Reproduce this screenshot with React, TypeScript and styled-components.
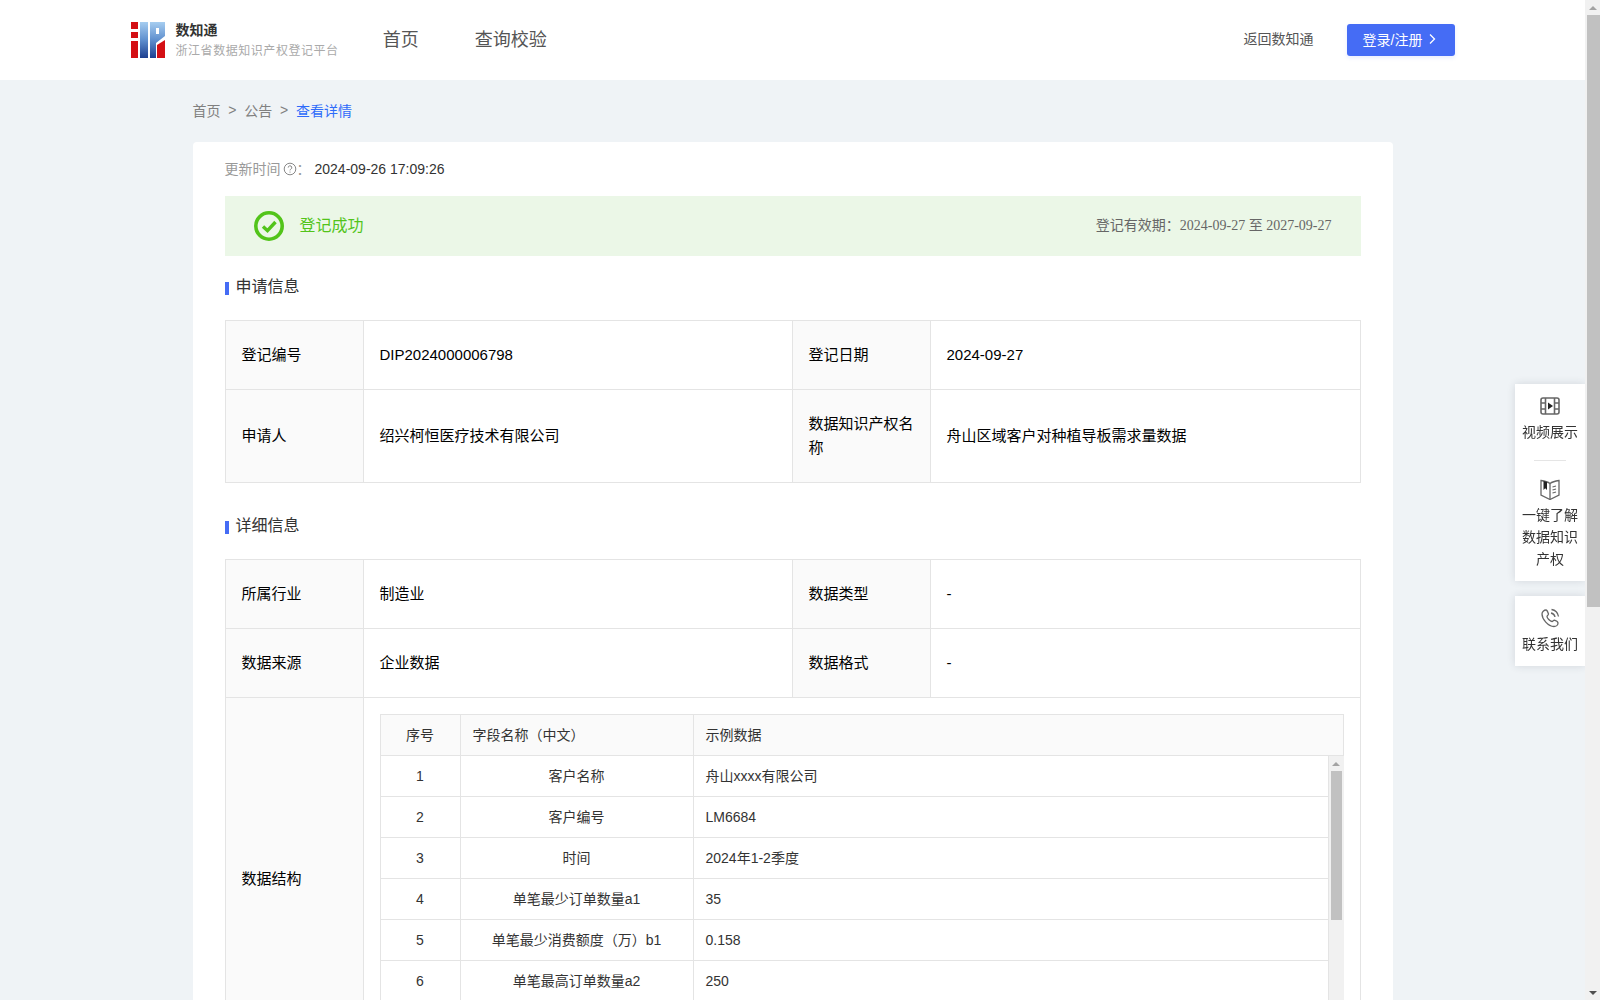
import React from "react";
import styled, { createGlobalStyle } from "styled-components";

const GlobalStyle = createGlobalStyle`
  body {
    margin: 0;
    background: #eff3f6;
    font-family: "Liberation Sans", "Noto Sans CJK SC", sans-serif;
    font-size: 14px;
    color: #333;
  }
  * {
    box-sizing: border-box;
  }
`;

const Page = styled.div`
  padding-right: 15px;
`;

const Header = styled.header`
  height: 80px;
  background: #fff;
`;

const HeaderInner = styled.div`
  width: 1324px;
  height: 100%;
  margin: 0 auto;
  display: flex;
  align-items: center;
`;

const Brand = styled.div`
  display: flex;
  align-items: center;
  gap: 11px;
`;

const BrandText = styled.div`
  display: flex;
  flex-direction: column;
  gap: 2px;
`;

const BrandName = styled.div`
  font-size: 14px;
  line-height: 20px;
  font-weight: 700;
  color: #333;
`;

const BrandSub = styled.div`
  font-size: 12px;
  line-height: 18px;
  letter-spacing: 0.55px;
  color: #aaa;
`;

const Nav = styled.nav`
  display: flex;
  gap: 56px;
  margin-left: 44px;
  padding-bottom: 5px;
`;

const NavItem = styled.a`
  font-size: 18px;
  color: #555;
`;

const HeaderRight = styled.div`
  margin-left: auto;
  display: flex;
  align-items: center;
  gap: 33px;
`;

const BackLink = styled.a`
  font-size: 14px;
  color: #555;
  padding-bottom: 4px;
`;

const LoginButton = styled.button`
  width: 108px;
  height: 32px;
  padding: 0 0 3px;
  border: 0;
  border-radius: 3px;
  background: #456cf5;
  box-shadow: 0 2px 4px rgba(69, 108, 245, 0.12);
  color: #fff;
  font: inherit;
  font-size: 14px;
  display: flex;
  align-items: center;
  justify-content: center;
  gap: 4px;
`;

const Main = styled.main`
  width: 1200px;
  margin: 0 auto;
  padding-bottom: 20px;
`;

const Breadcrumb = styled.div`
  height: 62px;
  padding-bottom: 3px;
  display: flex;
  align-items: center;
  color: #808080;
`;

const CrumbSep = styled.span`
  margin: 0 7.8px;
`;

const CrumbCurrent = styled.span`
  color: #2e6bfa;
`;

const Card = styled.section`
  min-height: 1476px;
  padding: 16px 32px 32px;
  background: #fff;
  border-radius: 4px;
`;

const UpdateRow = styled.div`
  height: 22px;
  margin-bottom: 16px;
  display: flex;
  align-items: center;
  color: #999;
`;

const UpdateLabel = styled.span`
  margin-bottom: 2px;
`;

const UpdateValue = styled.span`
  margin-left: 4px;
  color: #333;
`;

const HelpIcon = styled.svg`
  margin-left: 2px;
`;

const Banner = styled.div`
  height: 60px;
  padding: 0 29px;
  background: #ebf7e7;
  display: flex;
  align-items: center;
`;

const BannerTitle = styled.span`
  margin: 0 0 5px 16px;
  font-size: 16px;
  color: #52c41a;
`;

const Validity = styled.span`
  margin: 0 0 5px auto;
  color: #666;
`;

const SerifDate = styled.span`
  font-family: "Liberation Serif", "Noto Sans CJK SC", serif;
`;

const SectionTitle = styled.h3<{ $top: number }>`
  margin: ${(p) => p.$top}px 0 21px;
  height: 24px;
  font-size: 16px;
  font-weight: 400;
  line-height: 24px;
  color: #333;
  display: flex;
  align-items: center;

  &::before {
    content: "";
    width: 4px;
    height: 13px;
    margin: 3px 7px 0 0;
    background: #456cf5;
  }
`;

const InfoTable = styled.table`
  width: 100%;
  table-layout: fixed;
  border-collapse: collapse;
  font-size: 15px;
  line-height: 24px;
  color: #000;
`;

const Label = styled.th`
  padding: 22px 15px 22px 16px;
  border: 1px solid #e4e4e4;
  background: #fafafa;
  font-weight: 400;
  text-align: left;
`;

const Value = styled.td`
  padding: 22px 16px;
  border: 1px solid #e4e4e4;
`;

const StructureCell = styled.td`
  padding: 16px;
  border: 1px solid #e4e4e4;
`;

const Fields = styled.div`
  border-left: 1px solid #e4e4e4;
  border-top: 1px solid #e4e4e4;
  font-size: 14px;
  line-height: 20px;
  color: #333;
`;

const FieldsTable = styled.table`
  width: 100%;
  table-layout: fixed;
  border-collapse: separate;
  border-spacing: 0;
`;

const FieldsHead = styled.th<{ $center?: boolean }>`
  height: 41px;
  padding: 0 12px;
  border-right: 1px solid #e4e4e4;
  border-bottom: 1px solid #e4e4e4;
  background: #fafafa;
  font-weight: 400;
  text-align: ${(p) => (p.$center ? "center" : "left")};
`;

const FieldsBody = styled.div`
  height: 287px;
  display: flex;
`;

const FieldsRows = styled.div`
  flex: 1;
  min-width: 0;
  overflow: hidden;
`;

const FieldsCell = styled.td<{ $center?: boolean }>`
  height: 41px;
  padding: 0 12px;
  border-right: 1px solid #e4e4e4;
  border-bottom: 1px solid #e4e4e4;
  text-align: ${(p) => (p.$center ? "center" : "left")};
`;

const ScrollTrack = styled.div`
  width: 15px;
  flex: none;
  background: #f1f1f1;
`;

const PageTrack = styled(ScrollTrack)`
  position: fixed;
  top: 0;
  right: 0;
  bottom: 0;
  display: flex;
  flex-direction: column;
  justify-content: space-between;
`;

const ScrollArrow = styled.div<{ $down?: boolean }>`
  height: 15px;
  display: flex;
  align-items: center;
  justify-content: center;

  &::after {
    content: "";
    border-left: 4px solid transparent;
    border-right: 4px solid transparent;
    ${(p) =>
      p.$down
        ? "border-top: 4px solid #505050;"
        : "border-bottom: 4px solid #a3a3a3;"}
  }
`;

const PageThumb = styled.div`
  width: 13px;
  height: 592px;
  margin-left: 2px;
  background: #c1c1c1;
`;

const RowsThumb = styled.div`
  width: 11px;
  height: 149px;
  margin-left: 2px;
  background: #c1c1c1;
`;

const PageThumbSlot = styled.div`
  flex: 1;
`;

const SideDock = styled.aside`
  position: fixed;
  top: 384px;
  right: 15px;
  width: 70px;
  display: flex;
  flex-direction: column;
  gap: 15px;
`;

const SidePanel = styled.div`
  padding: 11px 7px;
  background: #fff;
  box-shadow: 0 0 8px rgba(40, 50, 70, 0.14);
  display: flex;
  flex-direction: column;
  align-items: center;
  font-size: 14px;
  line-height: 22px;
  color: #333;
  text-align: center;
`;

const SideIcon = styled.svg`
  width: 22px;
  height: 22px;
  margin-bottom: 4px;
  display: block;
`;

const SideDivider = styled.div`
  width: 32px;
  height: 1px;
  margin: 17px 0 17px;
  background: #e5e5e5;
`;

const fields = [
  ["客户名称", "舟山xxxx有限公司"],
  ["客户编号", "LM6684"],
  ["时间", "2024年1-2季度"],
  ["单笔最少订单数量a1", "35"],
  ["单笔最少消费额度（万）b1", "0.158"],
  ["单笔最高订单数量a2", "250"],
];

function Logo() {
  return (
    <svg width="34" height="36" viewBox="0 0 34 36">
      <defs>
        <linearGradient id="logoBlue" x1="0" y1="0" x2="0" y2="1">
          <stop offset="0" stopColor="#a6cdf0" />
          <stop offset="0.5" stopColor="#5f8fce" />
          <stop offset="1" stopColor="#1d3f8f" />
        </linearGradient>
      </defs>
      <rect x="0" y="0" width="7" height="7" fill="#d40f14" />
      <rect x="0" y="10" width="7" height="6" fill="#d40f14" />
      <rect x="0" y="19" width="7" height="17" fill="#d40f14" />
      <rect x="9" y="0" width="8" height="36" fill="url(#logoBlue)" />
      <path d="M19 0h15v14L25 21v15h-6z" fill="url(#logoBlue)" />
      <rect x="25" y="6" width="3" height="6" fill="#fff" />
      <path d="M26 23l8-5v18h-8z" fill="#d40f14" />
    </svg>
  );
}

function App() {
  return (
    <Page>
      <GlobalStyle />
      <Header>
        <HeaderInner>
          <Brand>
            <Logo />
            <BrandText>
              <BrandName>数知通</BrandName>
              <BrandSub>浙江省数据知识产权登记平台</BrandSub>
            </BrandText>
          </Brand>
          <Nav>
            <NavItem>首页</NavItem>
            <NavItem>查询校验</NavItem>
          </Nav>
          <HeaderRight>
            <BackLink>返回数知通</BackLink>
            <LoginButton>
              登录/注册
              <svg width="12" height="12" viewBox="0 0 12 12" fill="none" stroke="#fff" strokeWidth="1.3">
                <path d="M4 1.5L8.5 6L4 10.5" />
              </svg>
            </LoginButton>
          </HeaderRight>
        </HeaderInner>
      </Header>
      <Main>
        <Breadcrumb>
          首页
          <CrumbSep>&gt;</CrumbSep>
          公告
          <CrumbSep>&gt;</CrumbSep>
          <CrumbCurrent>查看详情</CrumbCurrent>
        </Breadcrumb>
        <Card>
          <UpdateRow>
            <UpdateLabel>更新时间</UpdateLabel>
            <HelpIcon width="14" height="14" viewBox="0 0 14 14" fill="none" stroke="#888">
              <circle cx="7" cy="7" r="5.8" />
              <path d="M5.2 5.6a1.8 1.8 0 1 1 2.6 1.6c-.6.3-.8.6-.8 1.2" />
              <path d="M7 9.6v1" />
            </HelpIcon>
            <UpdateLabel>：</UpdateLabel>
            <UpdateValue>2024-09-26 17:09:26</UpdateValue>
          </UpdateRow>
          <Banner>
            <svg width="30" height="30" viewBox="0 0 30 30" fill="none" stroke="#52c41a">
              <circle cx="15" cy="15" r="13.2" strokeWidth="3.6" />
              <path d="M9 15.5l4.5 4.2L21.5 11" strokeWidth="3.4" />
            </svg>
            <BannerTitle>登记成功</BannerTitle>
            <Validity>
              登记有效期：<SerifDate>2024-09-27 至 2027-09-27</SerifDate>
            </Validity>
          </Banner>

          <SectionTitle $top={19}>申请信息</SectionTitle>
          <InfoTable>
            <colgroup>
              <col width="138" />
              <col width="429" />
              <col width="138" />
              <col />
            </colgroup>
            <tbody>
              <tr>
                <Label>登记编号</Label>
                <Value>DIP2024000006798</Value>
                <Label>登记日期</Label>
                <Value>2024-09-27</Value>
              </tr>
              <tr>
                <Label>申请人</Label>
                <Value>绍兴柯恒医疗技术有限公司</Value>
                <Label>数据知识产权名称</Label>
                <Value>舟山区域客户对种植导板需求量数据</Value>
              </tr>
            </tbody>
          </InfoTable>

          <SectionTitle $top={31}>详细信息</SectionTitle>
          <InfoTable>
            <colgroup>
              <col width="138" />
              <col width="429" />
              <col width="138" />
              <col />
            </colgroup>
            <tbody>
              <tr>
                <Label>所属行业</Label>
                <Value>制造业</Value>
                <Label>数据类型</Label>
                <Value>-</Value>
              </tr>
              <tr>
                <Label>数据来源</Label>
                <Value>企业数据</Value>
                <Label>数据格式</Label>
                <Value>-</Value>
              </tr>
              <tr>
                <Label>数据结构</Label>
                <StructureCell colSpan={3}>
                  <Fields>
                    <FieldsTable>
                      <colgroup>
                        <col width="80" />
                        <col width="233" />
                        <col />
                      </colgroup>
                      <thead>
                        <tr>
                          <FieldsHead $center>序号</FieldsHead>
                          <FieldsHead>字段名称（中文）</FieldsHead>
                          <FieldsHead>示例数据</FieldsHead>
                        </tr>
                      </thead>
                    </FieldsTable>
                    <FieldsBody>
                      <FieldsRows>
                        <FieldsTable>
                          <colgroup>
                            <col width="80" />
                            <col width="233" />
                            <col />
                          </colgroup>
                          <tbody>
                            {fields.map((f, i) => (
                              <tr key={i}>
                                <FieldsCell $center>{i + 1}</FieldsCell>
                                <FieldsCell $center>{f[0]}</FieldsCell>
                                <FieldsCell>{f[1]}</FieldsCell>
                              </tr>
                            ))}
                          </tbody>
                        </FieldsTable>
                      </FieldsRows>
                      <ScrollTrack>
                        <ScrollArrow />
                        <RowsThumb />
                      </ScrollTrack>
                    </FieldsBody>
                  </Fields>
                </StructureCell>
              </tr>
            </tbody>
          </InfoTable>
        </Card>
      </Main>
      <SideDock>
        <SidePanel>
          <SideIcon viewBox="0 0 22 22" fill="none" stroke="#666" strokeWidth="1.6">
            <rect x="2" y="3" width="18" height="16" rx="2" />
            <path d="M6.5 3v16M15.5 3v16M2 8h4.5M2 14h4.5M15.5 8H20M15.5 14H20" />
            <path d="M9 7.5l5 3.5-5 3.5z" fill="#222" stroke="none" />
          </SideIcon>
          视频展示
          <SideDivider />
          <SideIcon viewBox="0 0 22 22" fill="none" stroke="#666" strokeWidth="1.3">
            <path d="M2 2.5c3.5.5 7 1.500 9 3 2-1.500 5.500-2.500 9-3V17L11 21.500 2 17z" />
            <path d="M11 5.500v16M13.500 9l3.500-1M13.500 12l3.500-1M13.500 15l3.500-1" />
            <path d="M4.500 3l3.500 1v8L6.200 10.300 4.500 12z" fill="#222" stroke="none" />
          </SideIcon>
          一键了解数据知识产权
        </SidePanel>
        <SidePanel>
          <SideIcon viewBox="0 0 22 22" fill="none" stroke="#666" strokeWidth="1.3">
            <path d="M7 3c1 0 2 2.500 2.500 4 .2.800-1.500 1.600-1.500 2.500 0 1.500 3 5 5 5 1 0 1.500-1.500 2.300-1.300 1.500.5 3.700 1.800 3.700 2.800 0 2-2 3.500-4 3.500C9 19.500 3 12 3 7c0-2 2-4 4-4z" />
            <path d="M12 6a5 5 0 0 1 4 4M12.500 2.500a8.500 8.500 0 0 1 7 7" />
          </SideIcon>
          联系我们
        </SidePanel>
      </SideDock>
      <PageTrack>
        <ScrollArrow />
        <PageThumb />
        <PageThumbSlot />
        <ScrollArrow $down />
      </PageTrack>
    </Page>
  );
}

export default App;
